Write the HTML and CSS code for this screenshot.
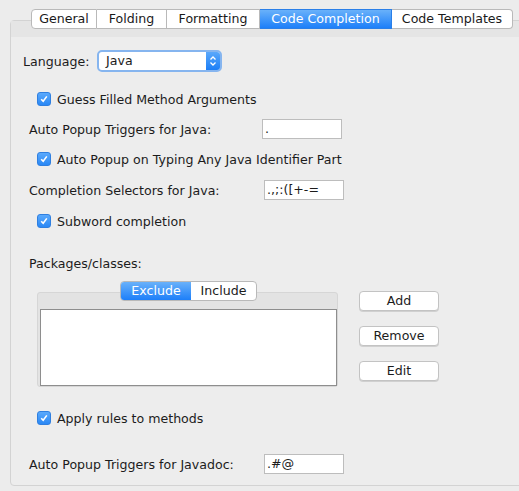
FILE: index.html
```html
<!DOCTYPE html>
<html>
<head>
<meta charset="utf-8">
<link rel="stylesheet" href="styles.css">
</head>
<body>
<div class="tabs">
  <div class="tab first">General</div>
  <div class="tab">Folding</div>
  <div class="tab">Formatting</div>
  <div class="tab active">Code Completion</div>
  <div class="tab">Code Templates</div>
</div>
<div class="panel">
  <div class="panel-strip"></div>
  <div class="content">
    <div class="row lang-row">
      <span class="lang-label">Language:</span>
      <div class="select">
        <span class="select-value">Java</span>
        <span class="select-arrows">
          <svg width="8" height="12" viewBox="0 0 8 12"><path d="M1.5 4.5 L4 2 L6.5 4.5 M1.5 7.5 L4 10 L6.5 7.5" fill="none" stroke="#fff" stroke-width="1.3"/></svg>
        </span>
      </div>
    </div>

    <label class="row check-row gap-cb1"><span class="cb"><svg width="10" height="10" viewBox="0 0 10 10"><path d="M2.2 5.2 L4.2 7.3 L7.8 2.4" fill="none" stroke="#fff" stroke-width="1.6"/></svg></span>Guess Filled Method Arguments</label>

    <div class="row field-row gap-f1">
      <span class="field-label">Auto Popup Triggers for Java:</span>
      <span class="field">.</span>
    </div>

    <label class="row check-row gap-cb2"><span class="cb"><svg width="10" height="10" viewBox="0 0 10 10"><path d="M2.2 5.2 L4.2 7.3 L7.8 2.4" fill="none" stroke="#fff" stroke-width="1.6"/></svg></span>Auto Popup on Typing Any Java Identifier Part</label>

    <div class="row field-row gap-f2">
      <span class="field-label wide">Completion Selectors for Java:</span>
      <span class="field">.,;:([+-=</span>
    </div>

    <label class="row check-row gap-cb3"><span class="cb"><svg width="10" height="10" viewBox="0 0 10 10"><path d="M2.2 5.2 L4.2 7.3 L7.8 2.4" fill="none" stroke="#fff" stroke-width="1.6"/></svg></span>Subword completion</label>

    <div class="row plain-label gap-pk">Packages/classes:</div>

    <div class="list-section">
      <div class="list-box">
        <div class="segmented">
          <span class="seg active">Exclude</span>
          <span class="seg">Include</span>
        </div>
        <div class="list-inner"></div>
      </div>
      <div class="buttons">
        <div class="btn">Add</div>
        <div class="btn">Remove</div>
        <div class="btn">Edit</div>
      </div>
    </div>

    <label class="row check-row gap-cb4"><span class="cb"><svg width="10" height="10" viewBox="0 0 10 10"><path d="M2.2 5.2 L4.2 7.3 L7.8 2.4" fill="none" stroke="#fff" stroke-width="1.6"/></svg></span>Apply rules to methods</label>

    <div class="row field-row gap-f3">
      <span class="field-label wide">Auto Popup Triggers for Javadoc:</span>
      <span class="field">.#@</span>
    </div>
  </div>
</div>
</body>
</html>
```

FILE: styles.css
```css
html, body {
  margin: 0;
  padding: 0;
}

body {
  width: 519px;
  height: 491px;
  overflow: hidden;
  background: #ececec;
  font-family: "DejaVu Sans", Verdana, sans-serif;
  font-size: 12.6px;
  color: #1c1c1c;
}

/* tab strip sitting across the top edge of the panel */
.tabs {
  display: flex;
  margin: 9px 0 -9px 31px;
  height: 20px;
  position: relative;
  z-index: 2;
  width: 482px;
}

.tab {
  box-sizing: border-box;
  height: 20px;
  line-height: 18px;
  background: #fff;
  border: 1px solid #b9b9b9;
  border-left: none;
  text-align: center;
  color: #1a1a1a;
}

.tab:nth-child(1) { width: 66px; }
.tab:nth-child(2) { width: 70px; }
.tab:nth-child(3) { width: 93px; }
.tab:nth-child(4) { width: 132px; }
.tab:nth-child(5) { width: 121px; border-radius: 0 4px 4px 0; }

.tab.first {
  border-left: 1px solid #b9b9b9;
  border-radius: 4px 0 0 4px;
}

.tab.active {
  background: linear-gradient(#69b1fa, #1d7ff9);
  border-color: #2a7fe8;
  color: #fff;
}

/* content panel */
.panel {
  box-sizing: border-box;
  margin-left: 10px;
  width: 520px;
  height: 466px;
  border: 1px solid #d3d3d3;
  border-radius: 4px;
  background: #ededed;
}

.panel-strip {
  height: 16px;
  background: #e5e5e5;
}

.content {
  display: flex;
  flex-direction: column;
  padding: 13px 0 0 0;
}

.row {
  display: flex;
  align-items: center;
}

/* language selector */
.lang-row {
  height: 22px;
  padding-left: 12px;
}

.lang-label {
  width: 74px;
}

.select {
  box-sizing: border-box;
  display: flex;
  width: 125px;
  height: 22px;
  border: 2px solid #86b5ef;
  border-radius: 5px;
  background: #fff;
  overflow: hidden;
}

.select-value {
  flex: 1;
  padding-left: 7px;
  line-height: 18px;
}

.select-arrows {
  width: 14px;
  background: linear-gradient(#5aa8fb, #1c7ef6);
  display: flex;
  align-items: center;
  justify-content: center;
}

/* checkboxes */
.check-row {
  height: 16px;
  padding-left: 26px;
}

.cb {
  box-sizing: border-box;
  width: 14px;
  height: 14px;
  border-radius: 3px;
  background: linear-gradient(#5aa9fc, #2a88f5);
  border: 1px solid #2f7fe0;
  margin-right: 6px;
  display: flex;
  align-items: center;
  justify-content: center;
}

/* label + text field rows */
.field-row {
  height: 20px;
  padding-left: 18px;
}

.field-label {
  width: 233px;
}

.field-label.wide {
  width: 235px;
}

.field {
  box-sizing: border-box;
  width: 80px;
  height: 20px;
  background: #fff;
  border: 1px solid #bdbdbd;
  padding-left: 2px;
  line-height: 18px;
}

.plain-label {
  height: 16px;
  padding-left: 18px;
}

.gap-cb1 { margin-top: 19px; }
.gap-f1 { margin-top: 12px; }
.gap-cb2 { margin-top: 12px; }
.gap-f2 { margin-top: 13px; }
.gap-cb3 { margin-top: 13px; }
.gap-pk { margin-top: 26px; }
.gap-cb4 { margin-top: 23px; }
.gap-f3 { margin-top: 28px; }

/* packages list with exclude/include switch */
.list-section {
  display: flex;
  margin-top: 9px;
  padding-left: 26px;
  height: 107px;
}

.list-box {
  box-sizing: border-box;
  position: relative;
  width: 301px;
  height: 95px;
  margin-top: 12px;
  background: #e3e3e3;
  border: 1px solid #d6d6d6;
  border-radius: 3px;
  padding: 16px 0 0 2px;
}

.segmented {
  position: absolute;
  top: -12px;
  left: 82px;
  display: flex;
  height: 20px;
  box-sizing: border-box;
  border: 1px solid #b9b9b9;
  border-radius: 4px;
  background: #fff;
  overflow: hidden;
}

.seg {
  line-height: 18px;
  text-align: center;
}

.seg:first-child { width: 70px; }
.seg:last-child { width: 65px; }

.seg.active {
  background: linear-gradient(#69b1fa, #1d7ff9);
  color: #fff;
}

.list-inner {
  box-sizing: border-box;
  width: 297px;
  height: 77px;
  background: #fff;
  border: 1px solid #8e8e8e;
}

.buttons {
  display: flex;
  flex-direction: column;
  gap: 15px;
  margin-left: 21px;
  margin-top: 11px;
}

.btn {
  box-sizing: border-box;
  width: 80px;
  height: 20px;
  line-height: 18px;
  text-align: center;
  background: #fff;
  border: 1px solid #c3c3c3;
  border-radius: 4px;
  box-shadow: 0 1px 0 #d0d0d0;
}
```
